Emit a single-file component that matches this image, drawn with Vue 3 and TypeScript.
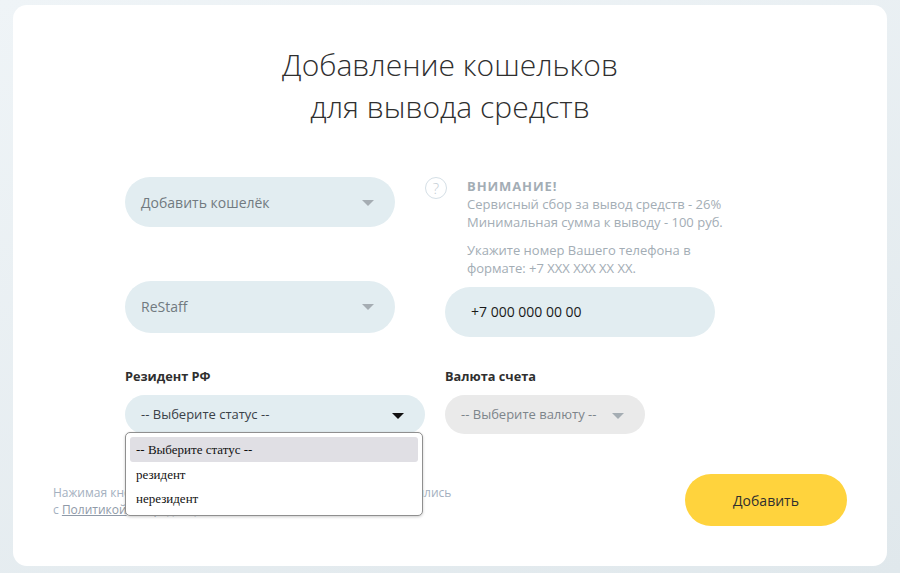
<script setup lang="ts">
const options: string[] = ['-- Выберите статус --', 'резидент', 'нерезидент']
</script>

<template>
  <div class="page">
    <main class="card">
      <h1 class="title">Добавление кошельков<br />для вывода средств</h1>

      <div class="form">
        <div class="col-left">
          <div class="select big first">
            <span>Добавить кошелёк</span>
            <i class="arrow"></i>
          </div>
          <div class="select big second">
            <span>ReStaff</span>
            <i class="arrow"></i>
          </div>
        </div>
        <div class="col-right">
          <div class="note">
            <span class="help">?</span>
            <div class="note-text">
              <p><b>ВНИМАНИЕ!</b><br />Сервисный сбор за вывод средств - 26%<br />Минимальная сумма к выводу - 100 руб.</p>
              <p class="hint">Укажите номер Вашего телефона в<br />формате: +7 XXX XXX XX XX.</p>
            </div>
          </div>
          <div class="phone">+7 000 000 00 00</div>
        </div>
      </div>

      <div class="selects">
        <div class="field status-field">
          <label>Резидент РФ</label>
          <div class="select small status">
            <span>-- Выберите статус --</span>
            <i class="arrow dark"></i>
          </div>
          <ul class="dropdown">
            <li v-for="(o, i) in options" :key="o" :class="{ active: i === 0 }">{{ o }}</li>
          </ul>
        </div>
        <div class="field">
          <label>Валюта счета</label>
          <div class="select small currency">
            <span>-- Выберите валюту --</span>
            <i class="arrow"></i>
          </div>
        </div>
      </div>

      <div class="footer">
        <p class="policy">Нажимая кнопку «Добавить», вы подтверждаете, что ознакомились<br />с <a>Политикой</a> конфиденциальности</p>
        <button class="submit" type="button">Добавить</button>
      </div>
    </main>
  </div>
</template>

<style>
html, body { margin: 0; padding: 0; }
</style>

<style scoped>
.page {
  box-sizing: border-box;
  width: 900px;
  height: 573px;
  padding: 5px 13px 7px;
  background: linear-gradient(160deg, #eff4f7 0%, #e0e8ec 100%);
  font-family: "Open Sans", sans-serif;
  overflow: hidden;
}
.card {
  box-sizing: border-box;
  height: 561px;
  background: #fff;
  border-radius: 14px;
  padding: 39px 40px 0;
}
.title {
  margin: 0;
  text-align: center;
  font-weight: 300;
  font-size: 30px;
  line-height: 42px;
  color: #2f2f2f;
}
.form {
  display: flex;
  gap: 50px;
  margin: 49px 0 0 72px;
}
.col-left { width: 270px; }
.col-right { width: 280px; }
.select {
  box-sizing: border-box;
  display: flex;
  align-items: center;
  justify-content: space-between;
  background: #e2edf1;
  color: #717a80;
  font-size: 14px;
}
.select.big {
  width: 270px;
  border-radius: 26px;
  padding: 0 21px 0 16px;
}
.first { height: 50px; }
.second { height: 52px; margin-top: 54px; padding-bottom: 2px !important; }
.arrow {
  width: 0;
  height: 0;
  border-left: 6px solid transparent;
  border-right: 6px solid transparent;
  border-top: 6px solid #a5adb3;
  margin-top: 2px;
}
.arrow.dark { border-top-color: #111; }
.note {
  display: flex;
  align-items: flex-start;
  margin-left: -20px;
  width: 300px;
}
.help {
  box-sizing: border-box;
  flex: none;
  width: 22px;
  height: 22px;
  border: 1px solid #d5dfe6;
  border-radius: 50%;
  text-align: center;
  font-size: 15px;
  font-weight: 300;
  line-height: 20px;
  color: #c3ccd3;
}
.note-text {
  margin-left: 20px;
  font-size: 13px;
  line-height: 18px;
  color: #a3adb5;
}
.note-text p { margin: 0; }
.note-text b { font-weight: 700; letter-spacing: 0.9px; }
.note-text .hint { margin-top: 10px; }
.phone {
  box-sizing: border-box;
  width: 270px;
  height: 50px;
  margin-top: 10px;
  padding-left: 26px;
  border-radius: 26px;
  background: #e2edf1;
  color: #1a1a1a;
  font-size: 14px;
  line-height: 50px;
}
.selects {
  display: flex;
  gap: 20px;
  margin: 30px 0 0 72px;
}
.field { position: relative; }
.field label {
  display: block;
  font-size: 12.75px;
  font-weight: 700;
  line-height: 18px;
  color: #2f2f2f;
  margin-bottom: 10px;
}
.select.small {
  height: 39px;
  border-radius: 20px;
  font-size: 13px;
  padding: 0 21px 2px 16px;
}
.select.small .arrow { margin-top: 4px; }
.status { width: 300px; color: #3a4148 !important; }
.currency { width: 200px; background: #eaeaea !important; color: #7d858b !important; }
.dropdown {
  position: absolute;
  left: 0;
  top: 65px;
  box-sizing: border-box;
  width: 298px;
  height: 84px;
  margin: 0;
  padding: 4px;
  list-style: none;
  background: #fff;
  border: 1px solid #8f8f8f;
  border-radius: 5px;
  box-shadow: 0 1px 3px rgba(0, 0, 0, 0.2);
  font-family: "Liberation Serif", serif;
  font-size: 13px;
  color: #111;
  z-index: 2;
}
.dropdown li {
  height: 24px;
  line-height: 25px;
  padding-left: 6px;
  border-radius: 3px;
}
.dropdown li.active { background: #e0dfe4; height: 25px; }
.footer {
  position: relative;
  display: flex;
  align-items: flex-start;
  justify-content: space-between;
  margin: 40px 0 0;
}
.policy {
  margin: 10px 0 0;
  font-size: 12px;
  line-height: 17px;
  color: #a4b0c0;
}
.policy a { text-decoration: underline; color: #8f9aa8; }
.submit {
  width: 162px;
  height: 52px;
  border: 0;
  border-radius: 26px;
  background: #ffd33d;
  color: #2f2f2f;
  font-family: inherit;
  font-size: 14px;
}
</style>
